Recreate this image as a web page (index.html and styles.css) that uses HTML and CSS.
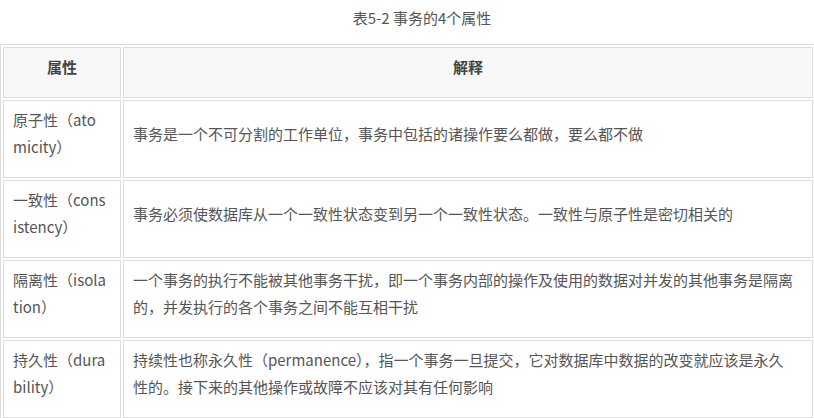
FILE: index.html
```html
<!DOCTYPE html>
<html lang="zh-CN">
  <head>
    <meta charset="utf-8" />
    <link rel="stylesheet" href="styles.css">
  </head>
  <body>
    <p class="caption">表5-2 事务的4个属性</p>
    <table class="props">
      <thead>
        <tr>
          <th class="col-name"><p>属性</p></th>
          <th class="col-desc"><p>解释</p></th>
        </tr>
      </thead>
      <tbody>
        <tr>
          <td class="col-name"><p>原子性（atomicity）</p></td>
          <td class="col-desc"><p>事务是一个不可分割的工作单位，事务中包括的诸操作要么都做，要么都不做</p></td>
        </tr>
        <tr>
          <td class="col-name"><p>一致性（consistency）</p></td>
          <td class="col-desc"><p>事务必须使数据库从一个一致性状态变到另一个一致性状态。一致性与原子性是密切相关的</p></td>
        </tr>
        <tr>
          <td class="col-name"><p>隔离性（isolation）</p></td>
          <td class="col-desc"><p>一个事务的执行不能被其他事务干扰，即一个事务内部的操作及使用的数据对并发的其他事务是隔离的，并发执行的各个事务之间不能互相干扰</p></td>
        </tr>
        <tr>
          <td class="col-name"><p>持久性（durability）</p></td>
          <td class="col-desc"><p>持续性也称永久性（permanence），指一个事务一旦提交，它对数据库中数据的改变就应该是永久性的。接下来的其他操作或故障不应该对其有任何影响</p></td>
        </tr>
      </tbody>
    </table>
  </body>
</html>
```

FILE: styles.css
```css
html, body {
  margin: 0;
  overflow: hidden;
}

body {
  font-family: "Noto Sans CJK SC", "Noto Sans", sans-serif;
  font-size: 15px;
  line-height: 27px;
  color: #555;
  background: #fff;
}

.caption {
  margin: 0;
  padding: 4px 0 13px 30px;
  text-align: center;
  color: #555;
}

.props {
  width: calc(100% + 2px);
  border: 1px solid #ddd;
  border-spacing: 2px;
  border-collapse: separate;
}

.props th,
.props td {
  border: 1px solid #ddd;
  padding: 5px 9px;
  vertical-align: middle;
  text-align: left;
  word-break: break-all;
}

.props p {
  margin: 0 0 12px;
}

.props .col-name {
  width: 93px;
  padding-right: 14px;
}

.props .col-desc {
  padding-right: 16px;
}

.props th,
.props th.col-name,
.props th.col-desc {
  padding-left: 11px;
  padding-right: 11px;
  background: #f8f8f8;
  color: #444;
  font-weight: bold;
  text-align: center;
}
```
